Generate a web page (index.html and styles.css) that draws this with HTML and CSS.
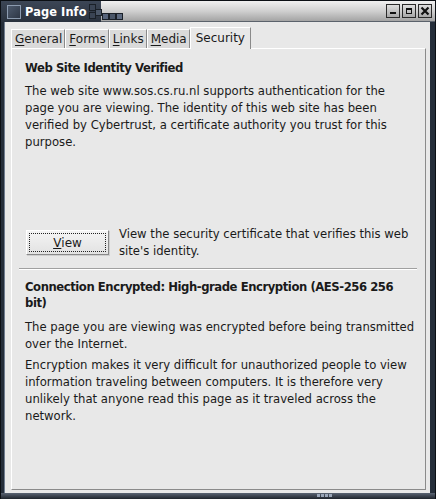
FILE: index.html
```html
<!DOCTYPE html>
<html>
<head>
<meta charset="utf-8">
<link rel="stylesheet" href="styles.css">
</head>
<body>
<div class="window">
  <div class="titlebar">
    <div class="title-dark">
      <span class="win-icon"></span>
      <span class="title">Page Info</span>
      <span class="squares">
        <i class="sq s1"></i><i class="sq s2"></i><i class="sq s3"></i><i class="sq s4"></i><i class="sq s5"></i><i class="sq s6"></i>
      </span>
    </div>
    <div class="title-light">
      <div class="wbtns">
        <span class="wbtn"><svg width="10" height="10" viewBox="0 0 10 10"><rect x="2" y="6" width="6" height="2" fill="#111"/></svg></span>
        <span class="wbtn"><svg width="10" height="10" viewBox="0 0 10 10"><rect x="2.5" y="2.5" width="5" height="5" fill="none" stroke="#111" stroke-width="1"/><rect x="2" y="2" width="6" height="2" fill="#111"/></svg></span>
        <span class="wbtn"><svg width="10" height="10" viewBox="0 0 10 10"><path d="M1.5 1.5 L8.5 8.5 M8.5 1.5 L1.5 8.5" stroke="#111" stroke-width="2.2"/></svg></span>
      </div>
    </div>
  </div>
  <div class="client">
    <div class="tabs">
      <div class="tab"><u>G</u>eneral</div>
      <div class="tab"><u>F</u>orms</div>
      <div class="tab"><u>L</u>inks</div>
      <div class="tab"><u>M</u>edia</div>
      <div class="tab active">Security</div>
    </div>
    <div class="panel">
      <h2 class="heading">Web Site Identity Verified</h2>
      <p class="para">The web site www.sos.cs.ru.nl supports authentication for the page you are viewing. The identity of this web site has been verified by Cybertrust, a certificate authority you trust for this purpose.</p>
      <div class="view-row">
        <button class="btn"><span class="focus"><u>V</u>iew</span></button>
        <p class="view-text">View the security certificate that verifies this web site's identity.</p>
      </div>
      <div class="sep"></div>
      <h2 class="heading heading2">Connection Encrypted: High-grade Encryption (AES-256 256 bit)</h2>
      <p class="para p2">The page you are viewing was encrypted before being transmitted over the Internet.</p>
      <p class="para p3">Encryption makes it very difficult for unauthorized people to view information traveling between computers. It is therefore very unlikely that anyone read this page as it traveled across the network.</p>
    </div>
  </div>
  <div class="bottom">
    <span class="grip"><i></i><i></i><i></i><i></i></span>
  </div>
</div>
</body>
</html>
```
FILE: styles.css
```css
* { box-sizing: border-box; }
html, body { margin: 0; padding: 0; }
body {
  width: 436px;
  height: 499px;
  overflow: hidden;
  font-family: "DejaVu Sans", "Noto Sans", sans-serif;
  font-size: 11.65px;
  color: #1a1a1a;
  background: #1f2731;
}
.window {
  width: 436px;
  height: 499px;
  display: flex;
  flex-direction: column;
  background: #252e3a;
  border-top: 1px solid #0b0f14;
  border-left: 1px solid #0b0f14;
  border-right: 1px solid #0b0f14;
}
.titlebar {
  height: 21px;
  display: flex;
  flex: none;
}
.title-dark {
  width: 100px;
  display: flex;
  align-items: center;
  background: linear-gradient(#3c4656, #2a323e);
  position: relative;
}
.win-icon {
  width: 14px;
  height: 14px;
  margin-left: 6px;
  border: 1px solid #8c9bb0;
  background: linear-gradient(135deg, #4e5b6e, #2e3746);
  flex: none;
}
.title {
  color: #fff;
  font-weight: bold;
  font-size: 11.4px;
  margin-left: 4px;
  letter-spacing: 0.1px;
}
.squares { position: absolute; left: 88px; top: 0; width: 38px; height: 20px; z-index: 2; }
.sq { position: absolute; width: 7px; height: 7px; background: #4a5668; border: 1px solid #1a2028; }
.s1 { left: 0; top: 3px; background: #3a4454; }
.s2 { left: 6px; top: 8px; }
.s3 { left: 13px; top: 12px; background: #56637a; }
.s4 { left: 20px; top: 12px; }
.s5 { left: 27px; top: 12px; background: #5d6a80; }
.s6 { left: 0; top: 11px; background: #3a4454; }
.title-light {
  flex: 1;
  background: linear-gradient(#f0f0f0, #d0d0d0 50%, #a4a4a4);
  display: flex;
  justify-content: flex-end;
  align-items: center;
  padding-right: 3px;
  border-bottom: 1px solid #5b626b;
}
.wbtns { display: flex; gap: 2px; }
.wbtn {
  width: 14px;
  height: 14px;
  background: linear-gradient(#dedede, #a8a8a8);
  border: 1px solid #2a2a2a;
  display: flex;
  align-items: center;
  justify-content: center;
}
.client {
  flex: 1;
  margin-left: 3px;
  margin-right: 5px;
  background: #e8e8e8;
  border-left: 1px solid #6f7c8f;
  padding: 5px 4px 0 6px;
  display: flex;
  flex-direction: column;
}
.tabs {
  display: flex;
  align-items: flex-end;
  height: 21px;
  position: relative;
  z-index: 1;
}
.tab {
  height: 19px;
  padding: 0 2px 0 3px;
  background: #dadada;
  border-top: 1px solid #fff;
  border-left: 1px solid #fff;
  border-right: 1px solid #8a8a8a;
  line-height: 18px;
  font-size: 12px;
  color: #1a1a1a;
}
.tab u { text-decoration-thickness: 1px; text-underline-offset: 2px; }
.tab.active {
  height: 22px;
  background: #e8e8e8;
  margin-bottom: -1px;
  padding: 0 5px 0 5px;
  margin-left: 0;
  line-height: 20px;
}
.panel {
  height: 442px;
  border-top: 1px solid #fff;
  border-left: 1px solid #fff;
  border-right: 1px solid #8a8a8a;
  border-bottom: 1px solid #8a8a8a;
  padding: 8px 8px 0 13px;
  flex: none;
}
.heading {
  font-size: 11.65px;
  letter-spacing: -0.45px;
  font-weight: bold;
  margin: 3px 0 0 0;
  line-height: 17px;
}
.para {
  margin: 6px 0 0 0;
  line-height: 17px;
}
.view-row {
  display: flex;
  align-items: flex-start;
  margin-top: 75px;
}
.btn {
  width: 83px;
  height: 25px;
  margin: 4px 10px 0 1px;
  padding: 2px;
  flex: none;
  font-family: inherit;
  font-size: 12px;
  color: #1a1a1a;
  background: linear-gradient(#f4f4f4, #e2e2e2);
  border: 1px solid;
  border-color: #fff #8a8a8a #8a8a8a #fff;
  box-shadow: 1px 1px 0 #cfcfcf;
}
.focus {
  display: flex;
  justify-content: center;
  align-items: center;
  height: 100%;
  border: 1px dotted #222;
}
.view-text {
  margin: 0;
  line-height: 17px;
}
.sep {
  margin: 8px 0 0 -6px;
  height: 2px;
  border-top: 1px solid #a0a0a0;
  border-bottom: 1px solid #fff;
}
.heading2 { margin-top: 9px; line-height: 16px; }
.p2 { margin-top: 8px; }
.p3 { margin-top: 4px; }
.bottom {
  height: 6px;
  flex: none;
  background: linear-gradient(#5a6473, #1e242c);
  position: relative;
}
.grip { position: absolute; left: 316px; top: 1px; display: flex; gap: 1px; }
.grip i { width: 3px; height: 3px; background: #9aa6b8; }
```
